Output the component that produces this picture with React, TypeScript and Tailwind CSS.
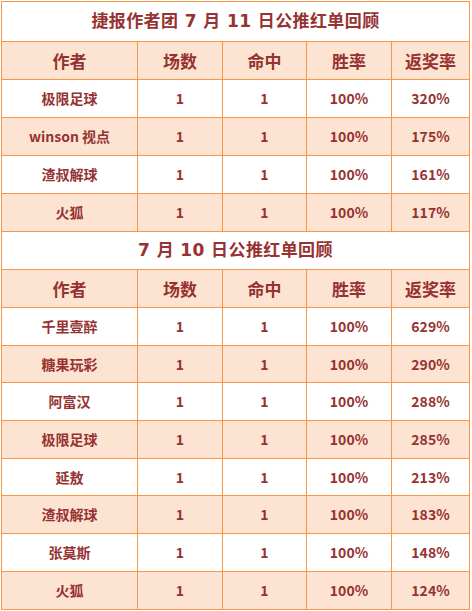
import React from "react";

const cols = ["w-[136px]", "w-[85px]", "w-[84px]", "w-[85px]", "w-[78px]"];
const headers = ["作者", "场数", "命中", "胜率", "返奖率"];

type Row = [string, string];

const s1: Row[] = [
  ["极限足球", "320%"],
  ["winson 视点", "175%"],
  ["渣叔解球", "161%"],
  ["火狐", "117%"],
];

const s2: Row[] = [
  ["千里壹醉", "629%"],
  ["糖果玩彩", "290%"],
  ["阿富汉", "288%"],
  ["极限足球", "285%"],
  ["延敖", "213%"],
  ["渣叔解球", "183%"],
  ["张莫斯", "148%"],
  ["火狐", "124%"],
];

function Title({ text, h }: { text: string; h: string }) {
  return (
    <div
      className={`flex ${h} items-center justify-center border-b border-r border-[#f79646] bg-white text-[17px] font-bold tracking-[0.4px] text-[#963232]`}
      style={{ fontFamily: '"DejaVu Sans", "Noto Sans CJK SC", sans-serif' }}
    >
      {text}
    </div>
  );
}

function Header() {
  return (
    <div className="flex h-[38px] bg-[#fde4d2]">
      {headers.map((t, i) => (
        <div
          key={i}
          className={`${cols[i]} flex items-center justify-center border-b border-r border-[#f79646] text-[17px] font-bold text-[#963232]`}
        >
          {t}
        </div>
      ))}
    </div>
  );
}

function DataRow({ r, alt, h }: { r: Row; alt: boolean; h: string }) {
  const vals = [r[0], "1", "1", "100%", r[1]];
  return (
    <div className={`flex ${h} ${alt ? "bg-[#fde4d2]" : "bg-white"}`}>
      {vals.map((t, i) => (
        <div
          key={i}
          className={`${cols[i]} flex items-center justify-center border-b border-r border-[#f79646] text-[14px] font-bold text-[#963232]`}
        >
          {t}
        </div>
      ))}
    </div>
  );
}

export default function App() {
  return (
    <div
      className="h-[611px] w-[472px] bg-white pl-px pt-px"
      style={{ fontFamily: '"Noto Sans CJK SC", "Noto Sans", sans-serif' }}
    >
      <div className="w-[469px] border-l border-t border-[#f79646]">
        <Title text="捷报作者团 7 月 11 日公推红单回顾" h="h-[40px]" />
        <Header />
        {s1.map((r, i) => (
          <DataRow key={i} r={r} alt={i % 2 === 1} h="h-[38px]" />
        ))}
        <Title text="7 月 10 日公推红单回顾" h="h-[38px]" />
        <Header />
        {s2.map((r, i) => (
          <DataRow key={i} r={r} alt={i % 2 === 1} h="h-[37.7px]" />
        ))}
      </div>
    </div>
  );
}
